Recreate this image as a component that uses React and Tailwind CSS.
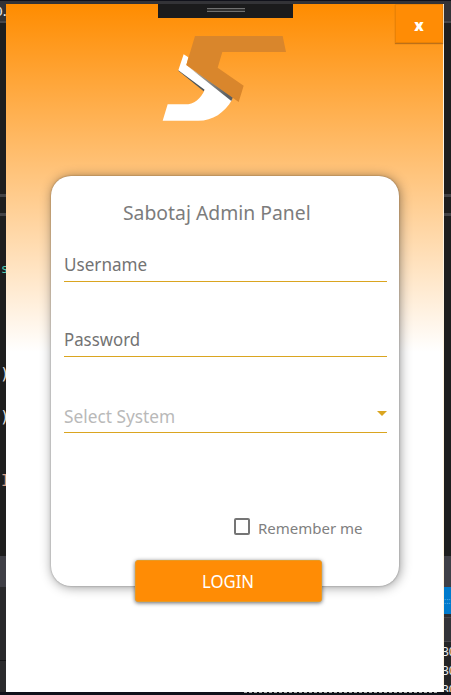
import React from "react";

function Logo() {
  return (
    <svg className="block h-[87px] w-[125px]" viewBox="36 105 375 261">
      <defs>
        <linearGradient id="fold" x1="0" x2="1" y1="0" y2="0.7">
          <stop offset="0" stopColor="#ffffff" />
          <stop offset="0.3" stopColor="#a39e94" />
          <stop offset="1" stopColor="#5c5f62" />
        </linearGradient>
      </defs>
      <path d="M85 212 L90 204 L168 262 L161 274Z" fill="#4e565b" />
      <path
        d="M101 163 L115 172 L109 195 L246 299 C224 338 188 362 145 362 L38 362 L53 313 L105 313 C132 313 153 296 164 269 L85 211Z"
        fill="#fff"
      />
      <path d="M109 196 L249 291 L244 303Z" fill="url(#fold)" />
      <path d="M135 108 L398 108 L408 156 L217 156 L203 203 L281 257 L266 306 L109 195Z" fill="#d9862c" />
    </svg>
  );
}

function LeftEditor() {
  return (
    <div className="relative w-[6px] shrink-0 overflow-hidden bg-[#1e1e1e] font-['DejaVu_Sans_Mono',monospace] text-[13px] leading-4">
      <div className="h-[17px] bg-[#333337]" />
      <div className="h-[2px] bg-[#46464a]" />
      <div className="mt-[171px] h-[3px] bg-[#434346]" />
      <div className="mt-4 h-[3px] bg-[#434346]" />
      <div className="mt-[340px] h-[31px] bg-[#3f3f46]" />
      <div className="h-[73px] bg-[#29292b]" />
      <div className="h-px bg-[#151517]" />
      <div className="h-8 bg-[#2b2b2d]" />
      <span className="absolute top-0 -left-[5px] tracking-[-2px] text-[#eee]">0.</span>
      <span className="absolute top-[257px] left-[1px] text-[12px] text-[#4ec9b0]">s</span>
      <span className="absolute top-[362px] left-0 text-[16px] text-[#dcdcdc]">)</span>
      <span className="absolute top-[405px] left-0 text-[16px] text-[#dcdcdc]">)</span>
      <span className="absolute top-[469px] left-[1px] text-[15px] text-[#d69d85]">I</span>
    </div>
  );
}

function RightEditor() {
  return (
    <div className="w-[7px] shrink-0 overflow-hidden bg-[#1e1e1e] font-['Noto_Sans',sans-serif] text-[12px] text-[#eee]">
      <div className="h-[17px] bg-[#333337]" />
      <div className="h-[2px] bg-[#46464a]" />
      <div className="mt-[171px] h-[3px] bg-[#434346]" />
      <div className="mt-4 h-[3px] bg-[#434346]" />
      <div className="mt-[340px] h-[31px] bg-[#3f3f46]" />
      <div className="h-[27px] bg-[#007acc] text-[8px] leading-[27px] text-[#65b5e8]">::::</div>
      <div className="h-[3px] bg-[#2d2d30]" />
      <div className="h-px bg-[#46464a]" />
      <div className="h-[23px] bg-[#333337]" />
      <div className="h-px bg-[#46464a]" />
      <div className="h-[50px] bg-[#252526] leading-[19px]">
        <div className="-ml-[2px] w-5">30</div>
        <div className="-ml-[2px] w-5">30</div>
        <div className="-ml-[2px] w-5">30</div>
      </div>
    </div>
  );
}

function Field({ children }) {
  return (
    <div className="flex h-7 items-start border-b border-[#daa520] text-[18px] leading-5 text-[#737373]">
      {children}
    </div>
  );
}

export default function App() {
  return (
    <div className="flex h-[695px] w-[451px] flex-col overflow-hidden bg-[#10111a] font-['Noto_Sans',sans-serif]">
      <div className="h-px shrink-0 bg-[#10111a]" />
      <div className="h-[3px] shrink-0 bg-[#333337]" />
      <div className="flex h-[688px] shrink-0">
        <LeftEditor />
        <main className="relative flex w-[438px] shrink-0 flex-col items-center border-r border-[#fff4df] bg-white bg-[linear-gradient(to_bottom,#ff8c00_0px,#ffffff_348px)]">
          <div className="flex w-full justify-end">
            <button className="flex h-[39px] w-[48px] items-center justify-center border border-[#eb8204] bg-[#ff8c05] pt-[3px] font-['Open_Sans',sans-serif] text-[15px] leading-none font-extrabold text-white shadow-[0_1px_1px_#bd7018]">
              x
            </button>
          </div>
          <div className="absolute top-0 left-[152px] flex h-[14px] w-[135px] items-center justify-center bg-[#1b1b1c] pb-[2px]">
            <div className="h-1 w-[38px] border-y border-[#707070] bg-[#303030]" />
          </div>
          <div className="-mt-2 mr-[1px]">
            <Logo />
          </div>
          <section className="mt-[54px] ml-px flex h-[410px] w-[348px] flex-col rounded-[20px] bg-white pr-3 pl-[13px] shadow-[0_0_2px_rgba(0,0,0,0.35),1px_1px_12px_rgba(0,0,0,0.42)]">
            <h1 className="mt-[23px] ml-[59px] h-7 w-[210px] origin-left scale-x-[0.967] text-[20px] leading-7 font-normal whitespace-nowrap text-[#7c7c7c]">
              Sabotaj Admin Panel
            </h1>
            <div className="mt-[27px]">
              <Field>
                <span className="origin-left scale-x-[0.95]">Username</span>
              </Field>
            </div>
            <div className="mt-[47px]">
              <Field>
                <span className="origin-left scale-x-[0.935]">Password</span>
              </Field>
            </div>
            <div className="mt-12">
              <Field>
                <span className="mt-px origin-left scale-x-[0.96] text-[#b9b9b9]">Select System</span>
                <span className="mt-[6px] ml-auto h-0 w-0 border-x-[5px] border-t-[5px] border-x-transparent border-t-[#daa520]" />
              </Field>
            </div>
            <label className="mt-[83px] ml-[170px] flex h-5 items-center">
              <span className="h-[17px] w-[16px] shrink-0 rounded-[2px] border-2 border-[#757575]" />
              <span className="mt-[3px] ml-[8px] origin-left text-[15px] leading-5 whitespace-nowrap text-[#808080]">
                Remember me
              </span>
            </label>
          </section>
          <button className="relative -mt-[26px] ml-[7px] flex h-[42px] w-[187px] items-center justify-center rounded-[3px] border border-[#e79a25] bg-[#ff8c05] text-[18px] leading-none text-white shadow-[0_1px_4px_rgba(0,0,0,0.6)]">
            <span className="scale-x-[0.93]">LOGIN</span>
          </button>
        </main>
        <RightEditor />
      </div>
      <div className="flex h-[3px] justify-end overflow-hidden bg-[#10111a] pr-[14px]">
        <div className="h-px w-[193px] border-t border-dashed border-[#aaa]" />
      </div>
    </div>
  );
}
